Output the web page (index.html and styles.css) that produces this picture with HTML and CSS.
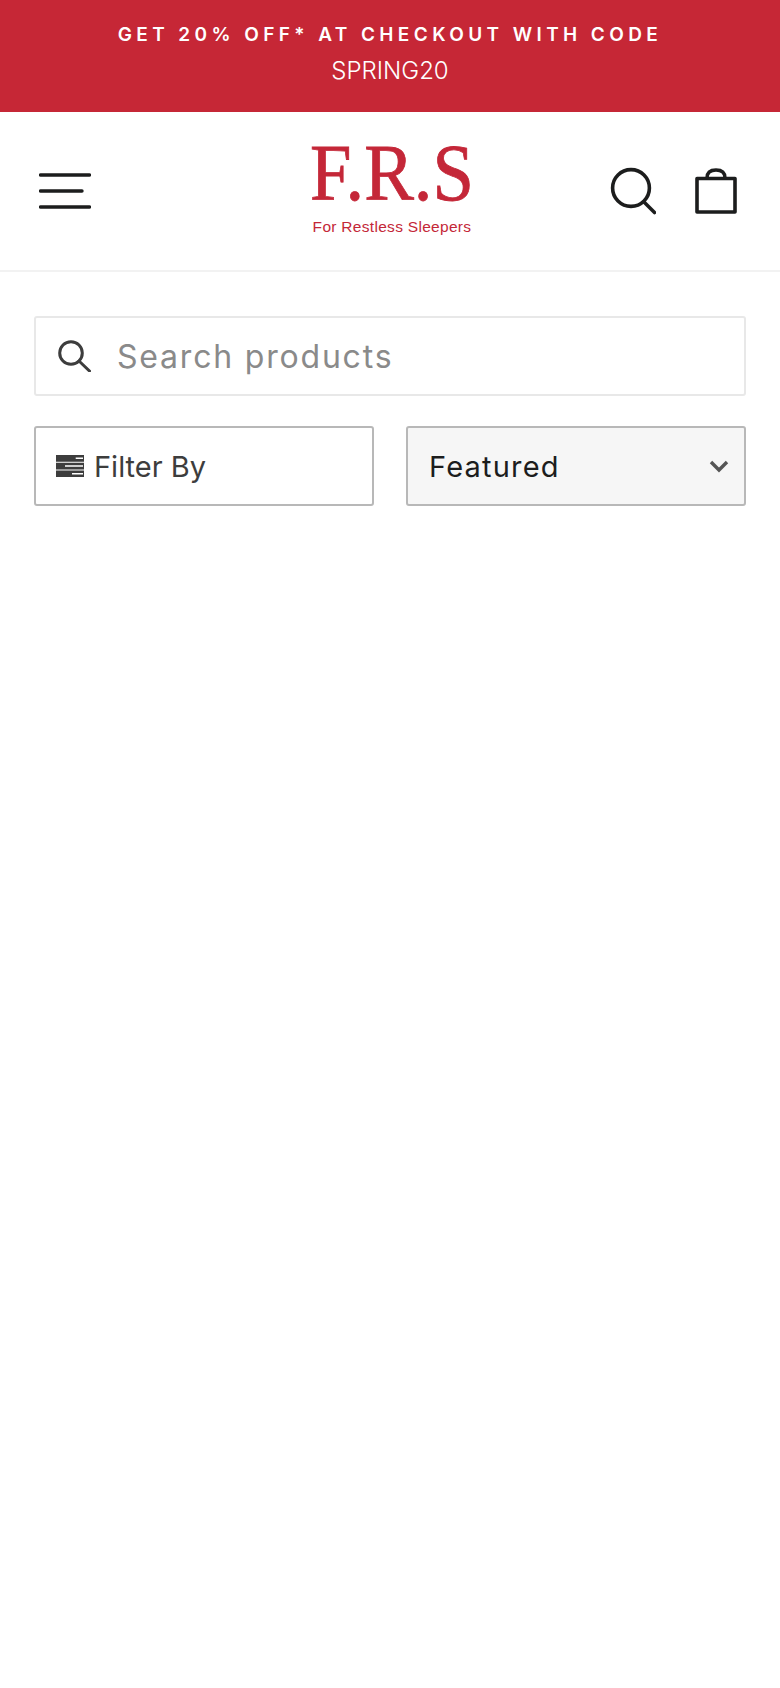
FILE: index.html
```html
<!DOCTYPE html>
<html>
	<head>
		<title>Products</title>
		<link rel="stylesheet" href="styles.css">
	</head>
	<body>
	<div class="announce">
		<p class="announce-head">GET 20% OFF* AT CHECKOUT WITH CODE</p>
		<p class="announce-code">SPRING20</p>
	</div>
	<header class="site-header">
		<svg class="icon-menu" width="52" height="36" viewBox="0 0 52 36">
			<path d="M1.5 2H50.5M1.5 18H43M1.5 34H50.5" fill="none" stroke="#1c1d1d" stroke-width="3.4" stroke-linecap="round"/>
		</svg>
		<div class="logo">
			<div class="logo-mark">F.R.S</div>
			<div class="logo-sub">For Restless Sleepers</div>
		</div>
		<div class="header-icons">
			<svg width="46" height="48" viewBox="0 0 46 48">
				<circle cx="21" cy="21" r="18.4" fill="none" stroke="#1c1d1d" stroke-width="3.6"/>
				<path d="M34 35L44.5 45.5" fill="none" stroke="#1c1d1d" stroke-width="3.6" stroke-linecap="round"/>
			</svg>
			<svg width="42" height="46" viewBox="0 0 42 46">
				<path d="M2 10.5H40V44H2Z" fill="none" stroke="#1c1d1d" stroke-width="3.6" stroke-linejoin="round"/>
				<path d="M12 10C12 4.5 15.5 2 21 2S30 4.5 30 10" fill="none" stroke="#1c1d1d" stroke-width="3.4"/>
			</svg>
		</div>
	</header>
	<main class="collection">
		<div class="search-box">
			<svg width="33" height="32" viewBox="0 0 33 32">
				<circle cx="13" cy="13" r="11.3" fill="none" stroke="#3d3d3d" stroke-width="3"/>
				<path d="M21 21L31.5 31" fill="none" stroke="#3d3d3d" stroke-width="3" stroke-linecap="round"/>
			</svg>
			<span class="search-text">Search products</span>
		</div>
		<div class="filter-row">
			<div class="filter-btn">
				<svg width="28" height="22" viewBox="0 0 28 22">
					<path d="M0 0H28V6.7H0ZM0 7.7H28V14.4H0ZM0 15.4H28V22H0Z" fill="#3d3d3d"/>
					<path d="M19.7 2.5H27V4H19.7ZM9 10.2H27V11.7H9ZM16 18H27V19.5H16Z" fill="#fff"/>
				</svg>
				<span>Filter By</span>
			</div>
			<div class="sort-select">
				<span class="sort-label">Featured</span>
				<svg width="20" height="13" viewBox="0 0 20 13">
					<path d="M2 2L10 10L18 2" fill="none" stroke="#555" stroke-width="3.4"/>
				</svg>
			</div>
		</div>
	</main>
	</body>
</html>
```

FILE: styles.css
```css
body
{
	margin: 0;
	background: #fff;
	color: #1c1d1d;
	font-family: Inter, "Open Sans", sans-serif;
}

.announce
{
	height: 112px;
	box-sizing: border-box;
	padding-top: 21px;
	background: #c62736;
	color: #fff;
	text-align: center;
}
.announce p
{
	margin: 0;
}
.announce-head
{
	font-size: 19px;
	font-weight: 600;
	line-height: 28px;
	letter-spacing: 4.4px;
}
.announce-code
{
	margin-top: 8px !important;
	font-size: 24px;
	font-weight: 300;
	line-height: 28px;
}

.site-header
{
	height: 158px;
	display: grid;
	grid-template-columns: 1fr auto 1fr;
	align-items: center;
	padding: 0 43px 0 39px;
	border-bottom: 2px solid #f2f2f2;
}
.logo
{
	width: 170px;
	margin: 0 0 4px 8px;
	color: #c42738;
	text-align: center;
}
.logo-mark
{
	margin: 0 -20px;
	font-family: "Liberation Serif", serif;
	font-size: 81px;
	line-height: 68px;
	-webkit-text-stroke: 0.8px #c42738;
	transform: scaleX(0.92);
}
.logo-sub
{
	font-family: "Liberation Sans", sans-serif;
	font-size: 15.5px;
	line-height: 24px;
	letter-spacing: 0.3px;
	margin-top: 8px;
	white-space: nowrap;
}
.header-icons
{
	display: flex;
	align-items: center;
	justify-content: flex-end;
	gap: 39px;
}

.collection
{
	padding: 44px 34px 0;
}
.search-box
{
	height: 80px;
	box-sizing: border-box;
	display: flex;
	align-items: center;
	gap: 26px;
	padding-left: 22px;
	border: 2px solid #e8e8e8;
	border-radius: 3px;
}
.search-text
{
	font-size: 32px;
	letter-spacing: 1.8px;
	color: #8a8a8a;
}
.filter-row
{
	display: grid;
	grid-template-columns: 340px 340px;
	gap: 32px;
	margin-top: 30px;
}
.filter-btn, .sort-select
{
	height: 80px;
	box-sizing: border-box;
	display: flex;
	align-items: center;
	border: 2px solid #b8b8b8;
	border-radius: 3px;
	font-size: 29px;
}
.filter-btn
{
	gap: 10px;
	padding-left: 20px;
	color: #3d3d3d;
}
.sort-select
{
	justify-content: space-between;
	padding: 0 15px 0 21px;
	background: #f6f6f6;
}
.sort-label
{
	letter-spacing: 1.2px;
}
```
